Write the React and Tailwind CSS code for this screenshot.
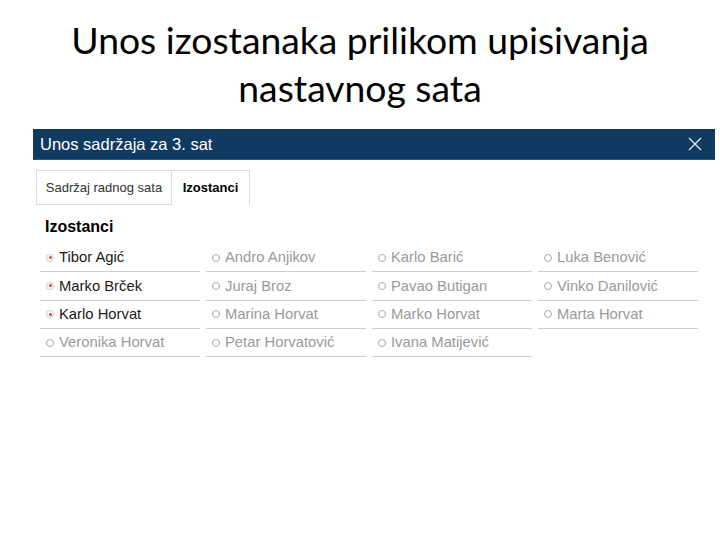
import React from "react";

const students = [
  ["Tibor Agić", true],
  ["Andro Anjikov", false],
  ["Karlo Barić", false],
  ["Luka Benović", false],
  ["Marko Brček", true],
  ["Juraj Broz", false],
  ["Pavao Butigan", false],
  ["Vinko Danilović", false],
  ["Karlo Horvat", true],
  ["Marina Horvat", false],
  ["Marko Horvat", false],
  ["Marta Horvat", false],
  ["Veronika Horvat", false],
  ["Petar Horvatović", false],
  ["Ivana Matijević", false],
];

function Radio({ checked }) {
  return (
    <span
      className={
        "flex h-[8px] w-[8px] shrink-0 items-center justify-center rounded-full border " +
        (checked ? "border-[#c9c9c9]" : "border-[#a9a9a9]")
      }
    >
      {checked && <span className="block h-[3px] w-[3px] rounded-full bg-[#d0454f]" />}
    </span>
  );
}

export default function App() {
  return (
    <div className="relative h-[540px] w-[720px] overflow-hidden bg-white">
      <h1
        className="pt-[16px] text-center text-[37.3px] leading-[48px] text-black"
        style={{ fontFamily: "Lato, 'Open Sans', sans-serif" }}
      >
        Unos izostanaka prilikom upisivanja
        <br />
        nastavnog sata
      </h1>

      <div
        className="ml-[33px] mt-[17px] w-[682px]"
        style={{ fontFamily: "'Liberation Sans', Arial, sans-serif" }}
      >
        <div className="flex h-[31px] items-center justify-between border-b border-[#2a5a86] bg-[#113a60] pl-[7px] pr-[13px]">
          <span className="text-[16.5px] leading-none text-white">Unos sadržaja za 3. sat</span>
          <svg width="14" height="14" viewBox="0 0 14 14" className="mt-[-1px]">
            <path d="M1 1 L13 13 M13 1 L1 13" stroke="#e8eef4" strokeWidth="1.2" fill="none" />
          </svg>
        </div>

        <div className="pl-[3px] pt-[10px]">
          <div className="flex h-[35px] text-[13px]">
            <div className="flex w-[136px] items-center justify-center border border-[#dcdcdc] text-[#333]">
              Sadržaj radnog sata
            </div>
            <div className="flex w-[78px] items-center justify-center border-r border-t border-[#dcdcdc] font-bold text-black">
              Izostanci
            </div>
          </div>
        </div>

        <div className="pl-[12px] pt-[12px] text-[16px] font-bold leading-[20px] text-black">Izostanci</div>

        <div className="mt-[7px] grid w-[665px] grid-cols-4 gap-x-[6px] pl-[7px]">
          {students.map(([name, checked]) => (
            <div
              key={name}
              className="flex h-[28.33px] items-center gap-[5px] border-b border-[#cfcfcf] pl-[6px]"
            >
              <Radio checked={checked} />
              <span
                className={
                  "text-[14.8px] leading-none " + (checked ? "text-[#1a1a1a]" : "text-[#9a9a9a]")
                }
              >
                {name}
              </span>
            </div>
          ))}
        </div>
      </div>
    </div>
  );
}
